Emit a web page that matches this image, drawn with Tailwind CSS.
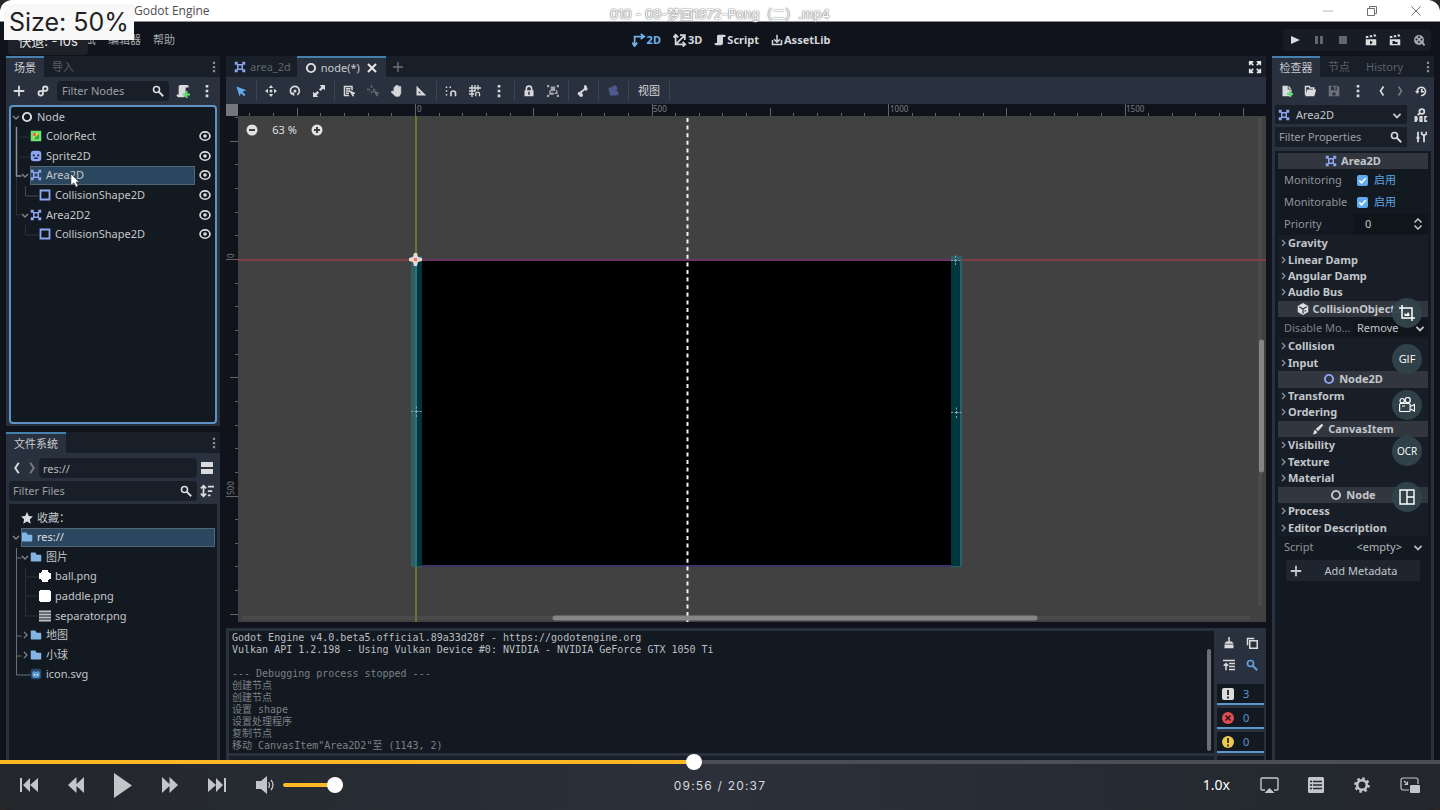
<!DOCTYPE html>
<html lang="zh-CN">
<head>
<meta charset="utf-8">
<title>Godot Engine</title>
<script src="https://cdn.jsdelivr.net/npm/@tailwindcss/browser@4"></script>
</head>
<body class="h-screen overflow-hidden bg-[#2a2726] font-['Noto_Sans','Noto_Sans_CJK_SC',sans-serif] text-[11px] leading-4 text-[#c3c6ca]">
<svg class="hidden" aria-hidden="true">
  <symbol id="area" viewBox="0 0 16 16"><g fill="none" stroke="#8da5f3" stroke-width="2"><path d="M5 5h6v6H5zM2 5V2h3M11 2h3v3M14 11v3h-3M5 14H2v-3M2 2l3 3M14 2l-3 3M14 14l-3-3M2 14l3-3"/></g></symbol>
  <symbol id="ring" viewBox="0 0 16 16"><circle cx="8" cy="8" r="5.5" fill="none" stroke="currentColor" stroke-width="2.6"/></symbol>
  <symbol id="eye" viewBox="0 0 16 16"><ellipse cx="8" cy="8" rx="6.6" ry="5.6" fill="none" stroke="currentColor" stroke-width="2.2"/><circle cx="8" cy="8" r="2.4" fill="currentColor"/></symbol>
  <symbol id="rect" viewBox="0 0 16 16"><path d="M2 2h12v12H2z" fill="none" stroke="#8da5f3" stroke-width="2.4"/></symbol>
  <symbol id="down" viewBox="0 0 10 10"><path d="M2 4l3 3 3-3" fill="none" stroke="currentColor" stroke-width="1.5"/></symbol>
  <symbol id="right" viewBox="0 0 10 10"><path d="M4 2l3 3-3 3" fill="none" stroke="currentColor" stroke-width="1.3"/></symbol>
  <symbol id="folder" viewBox="0 0 16 16"><path d="M1 3a1 1 0 0 1 1-1h5l2 3h5a1 1 0 0 1 1 1v7a1 1 0 0 1-1 1H2a1 1 0 0 1-1-1z" fill="#82b5e3"/></symbol>
  <symbol id="search" viewBox="0 0 16 16"><circle cx="6" cy="6" r="4" fill="none" stroke="currentColor" stroke-width="2.2"/><path d="M9 9l6 6" stroke="currentColor" stroke-width="2.4"/></symbol>
  <symbol id="dots" viewBox="0 0 16 16"><path d="M6.5 1h3v3h-3zM6.5 6.5h3v3h-3zM6.5 12h3v3h-3z" fill="currentColor"/></symbol>
  <symbol id="plus" viewBox="0 0 16 16"><path d="M8 1v14M1 8h14" stroke="currentColor" stroke-width="2.4"/></symbol>
  <symbol id="script" viewBox="0 0 16 16"><path d="M6 1h8a2 2 0 0 1 1 3h-3v8a3 3 0 0 1-3 3H3a2 2 0 0 1-2-3h3V3a2 2 0 0 1 2-2z" fill="currentColor"/></symbol>
  <symbol id="prev" viewBox="0 0 10 16"><path d="M7 2L3 8l4 6" fill="none" stroke="currentColor" stroke-width="2.2"/></symbol>
  <symbol id="next" viewBox="0 0 10 16"><path d="M3 2l4 6-4 6" fill="none" stroke="currentColor" stroke-width="2.2"/></symbol>
  <symbol id="clap" viewBox="0 0 16 16"><path d="M1 7h14v8H1zM1 3l3-.6 1 2.6-4 .8zM6 2l3-.6 1 2.6-3 .6zM11 1l3-.6 1 2.6-3 .6z" fill="currentColor"/></symbol>
</svg>

<div class="relative flex h-full flex-col overflow-hidden rounded-xl bg-[#10131b]">

  <header class="relative flex h-[22px] shrink-0 items-center border-b border-[#8b8d90] bg-white">
    <span class="pl-[134px] font-['Open_Sans',sans-serif] text-[12px] text-[#4c4c4c]">Godot Engine</span>
    <h1 class="absolute inset-x-0 top-[5px] text-center font-['Inter','Noto_Sans_CJK_SC',sans-serif] text-[13px] font-normal leading-[18px] text-white [text-shadow:0_0_1px_#777,0_0_1px_#888,0_0_2px_#999]">010 - 09-梦回1972-Pong（二）.mp4</h1>
    <div class="ml-auto flex items-center gap-8 pr-[18px] text-[#6f6f6f]">
      <button aria-label="Minimize"><svg class="size-3" viewBox="0 0 12 12"><path d="M1 6h10" stroke="#b5b5b5"/></svg></button>
      <button aria-label="Restore"><svg class="size-3" viewBox="0 0 12 12" fill="none" stroke="currentColor"><path d="M1.500 3.500h7v7h-7zM3.500 3V1.500h7v7H9"/></svg></button>
      <button aria-label="Close"><svg class="size-3" viewBox="0 0 12 12" stroke="currentColor"><path d="M1.500 1.500l9 9M10.500 1.500l-9 9"/></svg></button>
    </div>
  </header>

  <nav class="grid h-[34px] shrink-0 grid-cols-[1fr_auto_1fr] items-center pl-[22px] pt-px text-[#d3d5d8]">
    <div class="flex gap-3 pl-[52px] text-[#a5a8ad]">
      <button>调试</button><button>编辑器</button><button>帮助</button>
    </div>
    <div class="flex items-center gap-3 font-bold">
      <button class="flex items-center gap-px text-[#6eb2ee]"><svg class="size-3.5" viewBox="0 0 16 16" fill="none" stroke="currentColor" stroke-width="2"><path d="M3 14V4h10M10 1l4 3-4 3M0 11l3 4 3-4"/></svg>2D</button>
      <button class="flex items-center gap-px"><svg class="size-3.5" viewBox="0 0 16 16" fill="none" stroke="currentColor" stroke-width="2"><path d="M3 2v11h11M3 13l10-10M8 2.500h5.500V8M.5 5L3 2l3 3M11 10l3 3-3 2.500"/></svg>3D</button>
      <button class="flex items-center gap-px"><svg class="size-3"><use href="#script"/></svg>Script</button>
      <button class="flex items-center gap-px"><svg class="size-3" viewBox="0 0 16 16" fill="none" stroke="currentColor" stroke-width="2"><path d="M8 1v9M4 7l4 4 4-4M2 8v6h12V8"/></svg>AssetLib</button>
    </div>
    <div class="mr-[9px] flex h-[22px] items-center justify-self-end rounded-sm bg-[#171c26] text-[#dcdddf] *:flex *:w-6 *:justify-center">
      <button aria-label="Play"><svg class="size-3" viewBox="0 0 12 12"><path d="M2 2l9 4-9 4z" fill="currentColor"/></svg></button>
      <button aria-label="Pause" class="text-[#62666d]"><svg class="size-3" viewBox="0 0 12 12"><path d="M2 2h3v8H2zM7 2h3v8H7z" fill="currentColor"/></svg></button>
      <button aria-label="Stop" class="mr-1 text-[#62666d]"><svg class="size-3" viewBox="0 0 12 12"><path d="M2 2h8v8H2z" fill="currentColor"/></svg></button>
      <button aria-label="Play scene"><svg class="size-3" viewBox="0 0 12 12"><use href="#clap"/><path d="M5 6.500l3 2-3 2z" fill="#171c26"/></svg></button>
      <button aria-label="Play custom scene"><svg class="size-3" viewBox="0 0 12 12"><use href="#clap"/><path d="M3.500 7h2l1 1h2v2h-5z" fill="#171c26"/></svg></button>
      <button aria-label="Movie maker" class="text-[#a5a7ab]"><svg class="size-3" viewBox="0 0 12 12"><circle cx="6" cy="6" r="5" fill="currentColor"/><path d="M9 8l2.500 3.500" stroke="currentColor" stroke-width="2"/><g fill="#171c26"><circle cx="6" cy="3" r="1"/><circle cx="3.500" cy="5.500" r="1"/><circle cx="8.500" cy="5.500" r="1"/><circle cx="6" cy="8" r="1"/></g></svg></button>
    </div>
  </nav>

  <main class="flex min-h-0 flex-1 gap-1.5 overflow-hidden px-1.5">

    <!-- Left docks -->
    <aside class="flex w-[214px] shrink-0 flex-col gap-1.5">
      <section class="flex h-[370px] shrink-0 flex-col bg-[#2a313e] px-[3px] pb-0.5">
        <div class="-mx-[3px] flex h-[21px] shrink-0 items-stretch bg-[#191f28]">
          <button class="border-t-2 border-[#477fad] bg-[#2a313e] px-2 text-[#c9ccd0]">场景</button>
          <button class="px-2 text-[#5a6069]">导入</button>
          <button aria-label="Dock menu" class="ml-auto text-[#888c92]"><svg class="size-3"><use href="#dots"/></svg></button>
        </div>
        <div class="flex h-7 shrink-0 items-center text-[#dadbdd]">
          <button aria-label="Add node" class="flex w-6 shrink-0 justify-center pr-1"><svg class="size-3"><use href="#plus"/></svg></button>
          <button aria-label="Instance scene" class="flex w-6 shrink-0 justify-center pr-1"><svg class="size-3" viewBox="0 0 16 16" fill="none" stroke="currentColor" stroke-width="2.400"><circle cx="11" cy="5" r="3"/><circle cx="5" cy="11" r="3"/><path d="M7 9l2-2"/></svg></button>
          <label class="flex h-5 flex-1 items-center rounded-sm bg-[#191f28] px-[5px]"><input aria-label="Filter Nodes" placeholder="Filter Nodes" class="w-0 flex-1 bg-transparent outline-none placeholder:text-[#9b9fa5]"><svg class="size-3 shrink-0"><use href="#search"/></svg></label>
          <button aria-label="Attach script" class="flex w-7 shrink-0 justify-center"><svg class="size-3.5" viewBox="0 0 16 16"><path d="M5 1h8a2 2 0 0 1 1 3h-3v8a3 3 0 0 1-3 3H3a2 2 0 0 1-2-3h2V3a2 2 0 0 1 2-2z" fill="currentColor"/><path d="M12 8v8M8 12h8" stroke="#5fdb6b" stroke-width="2.400"/></svg></button>
          <button aria-label="More" class="flex w-5 shrink-0 justify-center"><svg class="size-3.5"><use href="#dots"/></svg></button>
        </div>
        <div class="relative min-h-0 flex-1 rounded-sm border-2 border-[#5f93c5] bg-[#131920]">
          <svg class="absolute left-0 top-0 h-[140px] w-[30px]" fill="none"><path d="M5.500 20v49h5" stroke="#8b9096" stroke-width="1.500"/><path d="M5.500 70v38h5M9 30h9M9 50h9M14.500 118v10h15" stroke="#2b323b"/><path d="M14.500 79v10h13" stroke="#454c54"/></svg>
          <ul class="relative grid h-[137px] auto-rows-fr" id="scene-tree">
            <li class="flex items-center"><svg class="size-2.5 text-[#7d8289]"><use href="#down"/></svg><span class="flex flex-1 items-center gap-1"><svg class="size-3 text-[#dcdddf]"><use href="#ring"/></svg>Node</span></li>
            <li class="flex items-center pl-[19px]"><span class="flex flex-1 items-center gap-1"><svg class="size-3" viewBox="0 0 16 16"><path d="M1 1h14v14H1z" fill="#6fe36f"/><path d="M4 4h4v4H4z" fill="#ef6a4a"/><path d="M8 4h4v8H4V8l4 3z" fill="#e4d53c"/><path d="M12 5v7H5z" fill="#3f9f46"/></svg>ColorRect</span><button aria-label="Toggle visibility" class="mx-1 text-[#dcdddf]"><svg class="block size-3"><use href="#eye"/></svg></button></li>
            <li class="flex items-center pl-[19px]"><span class="flex flex-1 items-center gap-1"><svg class="size-3" viewBox="0 0 16 16"><rect x="1" y="1" width="14" height="14" rx="4" fill="#8da5f3"/><g fill="#1c2440"><circle cx="5" cy="7" r="1.500"/><circle cx="11" cy="7" r="1.500"/><path d="M5 10h6l-1 2H6z"/></g></svg>Sprite2D</span><button aria-label="Toggle visibility" class="mx-1 text-[#dcdddf]"><svg class="block size-3"><use href="#eye"/></svg></button></li>
            <li class="flex items-center pl-[9px]"><svg class="size-2.5 text-[#7d8289]"><use href="#down"/></svg><span class="flex h-full flex-1 items-center gap-1 bg-[#2b465f] outline -outline-offset-1 outline-[#536676]"><svg class="size-3"><use href="#area"/></svg>Area2D</span><button aria-label="Toggle visibility" class="mx-1 text-[#dcdddf]"><svg class="block size-3"><use href="#eye"/></svg></button></li>
            <li class="flex items-center pl-7"><span class="flex flex-1 items-center gap-1"><svg class="size-3"><use href="#rect"/></svg>CollisionShape2D</span><button aria-label="Toggle visibility" class="mx-1 text-[#dcdddf]"><svg class="block size-3"><use href="#eye"/></svg></button></li>
            <li class="flex items-center pl-[9px]"><svg class="size-2.5 text-[#7d8289]"><use href="#down"/></svg><span class="flex flex-1 items-center gap-1"><svg class="size-3"><use href="#area"/></svg>Area2D2</span><button aria-label="Toggle visibility" class="mx-1 text-[#dcdddf]"><svg class="block size-3"><use href="#eye"/></svg></button></li>
            <li class="flex items-center pl-7"><span class="flex flex-1 items-center gap-1"><svg class="size-3"><use href="#rect"/></svg>CollisionShape2D</span><button aria-label="Toggle visibility" class="mx-1 text-[#dcdddf]"><svg class="block size-3"><use href="#eye"/></svg></button></li>
          </ul>
          <svg class="absolute left-[59px] top-[66px] h-4 w-2.5" viewBox="0 0 10 16"><path d="M1 1v11l3-2 2 4 2-1-2-4h3z" fill="#fff" stroke="#333" stroke-width=".5"/></svg>
        </div>
      </section>

      <section class="flex min-h-0 flex-1 flex-col bg-[#2a313e] px-[3px]">
        <div class="-mx-[3px] flex h-[21px] shrink-0 items-stretch bg-[#191f28]">
          <button class="border-t-2 border-[#477fad] bg-[#2a313e] px-2 text-[#c9ccd0]">文件系统</button>
          <button aria-label="Dock menu" class="ml-auto text-[#888c92]"><svg class="size-3"><use href="#dots"/></svg></button>
        </div>
        <div class="mt-[5px] flex h-5 shrink-0 items-center text-[#dadbdd]">
          <button aria-label="Back" class="flex w-[15px] justify-center"><svg class="h-3.5 w-2.5"><use href="#prev"/></svg></button>
          <button aria-label="Forward" class="flex w-[15px] justify-center text-[#777c84]"><svg class="h-3.5 w-2.5"><use href="#next"/></svg></button>
          <input aria-label="Path" value="res://" class="h-5 w-0 flex-1 rounded-sm bg-[#191f28] pl-1 text-[#b5b8bd] outline-none">
          <button aria-label="Split view" class="flex w-5 justify-center"><svg class="size-3.5" viewBox="0 0 14 14" fill="currentColor"><path d="M1 1h12v5H1zM1 8h12v5H1z"/></svg></button>
        </div>
        <div class="my-[3px] flex h-5 shrink-0 items-center text-[#dadbdd]">
          <label class="flex h-5 flex-1 items-center rounded-sm bg-[#191f28] pl-1 pr-[5px]"><input aria-label="Filter Files" placeholder="Filter Files" class="w-0 flex-1 bg-transparent outline-none placeholder:text-[#9b9fa5]"><svg class="size-3 shrink-0"><use href="#search"/></svg></label>
          <button aria-label="Sort" class="flex w-5 justify-center"><svg class="size-3.5" viewBox="0 0 16 16" fill="none" stroke="currentColor" stroke-width="2"><path d="M4 3v10M1 5l3-3 3 3M1 11l3 3 3-3M9 3h7M9 8h5M9 13h3"/></svg></button>
        </div>
        <div class="relative min-h-0 flex-1 bg-[#131920] px-0.5 pt-1">
          <svg class="absolute left-0.5 top-0.5 h-[180px] w-[30px]" fill="none"><path d="M5.500 42v127h14M5.500 52h5M5.500 130h5M5.500 150h5" stroke="#6a7077"/><path d="M14.500 62v48h14M14.500 71h14M14.500 90h14" stroke="#2b323b"/></svg>
          <ul class="relative grid h-[176px] auto-rows-fr">
            <li class="flex items-center gap-1 pl-2.5"><svg class="size-3" viewBox="0 0 16 16"><path d="M8 0l2.400 5.400 5.600.6-4.200 3.800L13 15.500 8 12.500l-5 3 1.200-5.700L0 6l5.600-.6z" fill="#dcdddf"/></svg>收藏：</li>
            <li class="flex items-center"><svg class="size-2.5 text-[#7d8289]"><use href="#down"/></svg><span class="flex h-full flex-1 items-center gap-1 bg-[#2b465f] text-[#dcdddf] outline -outline-offset-1 outline-[#536676]"><svg class="size-3"><use href="#folder"/></svg>res://</span></li>
            <li class="flex items-center pl-[9px]"><svg class="size-2.5 text-[#7d8289]"><use href="#down"/></svg><span class="flex items-center gap-1"><svg class="size-3"><use href="#folder"/></svg>图片</span></li>
            <li class="flex items-center gap-1 pl-7"><svg class="size-3" viewBox="0 0 12 12"><path d="M3 0h6v2h1v1h2v6h-2v1H9v2H3v-2H2V9H0V3h2V2h1z" fill="#fff"/></svg>ball.png</li>
            <li class="flex items-center gap-1 pl-7"><svg class="size-3" viewBox="0 0 12 12"><path d="M1 0h10v1h1v10h-1v1H1v-1H0V1h1z" fill="#fff"/></svg>paddle.png</li>
            <li class="flex items-center gap-1 pl-7"><svg class="size-3" viewBox="0 0 12 12"><path d="M0 1.500h12M0 4.500h12M0 7.500h12M0 10.500h12" stroke="#bfc1c4" stroke-width="2"/></svg>separator.png</li>
            <li class="flex items-center pl-[9px]"><svg class="size-2.5 text-[#7d8289]"><use href="#right"/></svg><span class="flex items-center gap-1"><svg class="size-3"><use href="#folder"/></svg>地图</span></li>
            <li class="flex items-center pl-[9px]"><svg class="size-2.5 text-[#7d8289]"><use href="#right"/></svg><span class="flex items-center gap-1"><svg class="size-3"><use href="#folder"/></svg>小球</span></li>
            <li class="flex items-center gap-1 pl-[19px]"><svg class="size-3" viewBox="0 0 16 16"><rect x="1" y="1" width="14" height="14" rx="3" fill="#284a6c"/><path d="M3 6l2-2 2 1h2l2-1 2 2v5l-2 2H5l-2-2z" fill="#5e9bd2"/><circle cx="6" cy="9" r="1" fill="#fff"/><circle cx="10" cy="9" r="1" fill="#fff"/></svg>icon.svg</li>
          </ul>
        </div>
      </section>
    </aside>

    <!-- Viewport and output -->
    <div class="flex min-w-0 flex-1 flex-col">
      <div class="flex h-[21px] shrink-0 items-stretch bg-[#191f28]">
        <button class="flex items-center gap-1 pl-2 pr-1.5 text-[#5f656e]"><svg class="size-3"><use href="#area"/></svg>area_2d</button>
        <div class="flex items-center border-t-2 border-[#477fad] bg-[#2a313e] px-2 text-[#c9ccd0]"><button class="flex items-center gap-1"><svg class="size-3 text-[#dcdddf]"><use href="#ring"/></svg>node(*)</button><button aria-label="Close tab" class="ml-1.5 text-[#e6e7e8]"><svg class="block size-3" viewBox="0 0 12 12"><path d="M2 2l8 8M10 2l-8 8" stroke="currentColor" stroke-width="2"/></svg></button></div>
        <button aria-label="New tab" class="ml-1.5 text-[#6c727a]"><svg class="size-3" viewBox="0 0 12 12"><path d="M6 1v10M1 6h10" stroke="currentColor" stroke-width="1.400"/></svg></button>
        <button aria-label="Distraction free mode" class="ml-auto mr-1 text-[#e6e7e8]"><svg class="size-3.5" viewBox="0 0 16 16" fill="none" stroke="currentColor" stroke-width="2"><path d="M2 6V2h4M2 2l4 4M10 2h4v4M14 2l-4 4M2 10v4h4M2 14l4-4M14 10v4h-4M14 14l-4-4"/></svg></button>
      </div>
      <div class="flex h-[27px] shrink-0 items-center bg-[#2a313e] pl-[3px] text-[#d6d8da] *:[button]:flex *:[button]:w-6 *:[button]:justify-center">
        <button aria-label="Select"><svg class="size-3" viewBox="0 0 16 16"><path d="M2 2l13 5-5 2 4 4-2 2-4-4-2 4z" fill="#62aaf0"/></svg></button>
        <i class="ml-[3px] mr-0.5 h-5 w-px bg-[#3b4453]"></i>
        <button aria-label="Move"><svg class="size-3" viewBox="0 0 16 16" fill="currentColor"><circle cx="8" cy="8" r="2"/><path d="M8 0l3 4H5zM8 16l3-4H5zM0 8l4-3v6zM16 8l-4-3v6z"/></svg></button>
        <button aria-label="Rotate"><svg class="size-3" viewBox="0 0 16 16"><path d="M4 12.500A6 6 0 1 1 11 13" fill="none" stroke="currentColor" stroke-width="2.200"/><circle cx="8" cy="8" r="2" fill="currentColor"/><path d="M1 10h6v5z" fill="currentColor"/></svg></button>
        <button aria-label="Scale"><svg class="size-3" viewBox="0 0 16 16" fill="currentColor"><path d="M9 0h7v7l-2.500-2L10 8 8 6l3-3.500zM7 16H0V9l2.500 2L6 8l2 2-3 3.500z"/></svg></button>
        <i class="ml-[3px] mr-0.5 h-5 w-px bg-[#3b4453]"></i>
        <button aria-label="List select"><svg class="size-3" viewBox="0 0 16 16" fill="none" stroke="currentColor" stroke-width="2"><path d="M12 7V2H2v12h6M4 5h6M4 8h5M4 11h4"/><path d="M8 8l7 3-3 1 2 3" fill="currentColor"/></svg></button>
        <button aria-label="Pivot" class="text-[#626974]"><svg class="size-3" viewBox="0 0 16 16" fill="none" stroke="currentColor" stroke-width="2"><path d="M6 0v4M6 8v3M0 6h4M8 6h3"/><path d="M8 8l7 3-3 1 2 3" fill="currentColor"/></svg></button>
        <button aria-label="Pan"><svg class="size-3" viewBox="0 0 16 16"><path d="M4 9V3h2v4V1h2v6V1h2v6l1-5h2v9l-2 4H6L0 9l2-1z" fill="currentColor" stroke="currentColor"/></svg></button>
        <button aria-label="Ruler"><svg class="size-3" viewBox="0 0 16 16"><path d="M2 1l13 13H2zM5 8v3h3z" fill="currentColor" fill-rule="evenodd"/></svg></button>
        <i class="ml-[3px] mr-0.5 h-5 w-px bg-[#3b4453]"></i>
        <button aria-label="Smart snap"><svg class="size-3" viewBox="0 0 16 16"><path d="M1 2h2v2H1zM6 2h2v2H6zM1 7h2v2H1zM1 12h2v2H1z" fill="currentColor"/><path d="M8 15v-4a3 3 0 0 1 6 0v4" fill="none" stroke="currentColor" stroke-width="2.200"/></svg></button>
        <button aria-label="Grid snap"><svg class="size-3" viewBox="0 0 16 16" fill="none" stroke="currentColor" stroke-width="1.800"><path d="M4 0v16M8 0v7M12 0v7M0 4h16M0 8h9M0 12h7M9 15v-3a2.500 2.500 0 0 1 5 0v3"/></svg></button>
        <button aria-label="Snap options"><svg class="size-3.5"><use href="#dots"/></svg></button>
        <i class="ml-[3px] mr-0.5 h-5 w-px bg-[#3b4453]"></i>
        <button aria-label="Lock"><svg class="size-3" viewBox="0 0 16 16"><path d="M4.500 8V5a3.500 3.500 0 0 1 7 0v3" fill="none" stroke="currentColor" stroke-width="2.200"/><path d="M2 7h12v8H2zM7 9v4h2V9z" fill="currentColor" fill-rule="evenodd"/></svg></button>
        <button aria-label="Group" class="text-[#a3a7ad]"><svg class="size-3" viewBox="0 0 16 16" fill="currentColor"><path d="M0 0h3v3H0zM13 0h3v3h-3zM0 13h3v3H0zM13 13h3v3h-3zM5 2h6v6H5zM3 7h2v3h4v3H3zM12 7h2v5h-4v-2h2z"/></svg></button>
        <i class="ml-[3px] mr-0.5 h-5 w-px bg-[#3b4453]"></i>
        <button aria-label="Skeleton"><svg class="size-3" viewBox="0 0 16 16" fill="currentColor"><path d="M10 0a2.500 2.500 0 0 1 3 3 2.500 2.500 0 1 1-3 4l-4 4a2.500 2.500 0 1 1-3 3 2.500 2.500 0 1 1 1-5l5-4z"/></svg></button>
        <i class="ml-[3px] mr-0.5 h-5 w-px bg-[#3b4453]"></i>
        <button aria-label="Camera override" class="text-[#4d5b8c]"><svg class="size-3" viewBox="0 0 16 16" fill="currentColor"><circle cx="10" cy="4" r="3.500"/><circle cx="5" cy="6" r="3"/><path d="M3 7h10v2l2-1v6l-2-1v1H4z"/></svg></button>
        <i class="ml-[3px] mr-0.5 h-5 w-px bg-[#3b4453]"></i>
        <span class="px-[7px]"><a href="#view">视图</a></span>
        <i class="ml-0.5 h-5 w-px bg-[#3b4453]"></i>
      </div>

      <div class="relative min-h-0 flex-1 overflow-hidden">
        <svg class="absolute inset-0 h-full w-full" id="canvas" aria-label="2D viewport">
          <rect x="12" y="12" width="100%" height="100%" fill="#414141"/>
          <rect width="12" height="12" fill="#73767a"/>
          <path id="ticks" stroke="#62666c" fill="none"/>
          <g fill="#7d8187" font-size="8" font-family="Noto Sans, sans-serif"><text x="191" y="8">0</text><text x="427" y="8">500</text><text x="664" y="8">1000</text><text x="900" y="8">1500</text><text transform="translate(8 154) rotate(-90)">0</text><text transform="translate(8 391) rotate(-90)">500</text></g>
          <path d="M1034 14v488M16 514h1008" stroke="#4a4a4a" stroke-width="4"/>
          <rect x="12" y="155" width="1028" height="2" fill="#804042"/>
          <rect x="190" y="156" width="545" height="306" fill="#000"/>
          <rect x="190" y="155" width="545" height="2" fill="#6b3268"/>
          <rect x="190" y="461" width="545" height="2" fill="#3a3564"/>
          <path d="M185 152h5v311h-5zM734 152h2v311h-2z" fill="#2b6069"/>
          <path d="M190 156h6v306h-6zM725 156h9v306h-9z" fill="#003640"/>
          <path d="M190 152h6v4h-6zM190 462h6v1h-6zM725 152h9v4h-9zM725 462h9v1h-9z" fill="#2b6069"/>
          <rect x="189" y="12" width="2" height="506" fill="#63792f"/>
          <rect x="189" y="156" width="2" height="307" fill="#347269"/>
          <path d="M461.500 14v504" stroke="#f2f2f2" stroke-width="2" stroke-dasharray="4 3.600"/>
          <g id="pivots" stroke="#8fa3a6" stroke-width="1" fill="none"><path d="M185 307.500h2M188.500 307.500h4M193.500 307.500h2M190.500 302.500v2M190.500 306v3M190.500 311v2M725 308.500h2M728.500 308.500h4M733.500 308.500h2M730.500 303.500v2M730.500 307v3M730.500 312v2M725 156.500h2M727.500 156.500h4M732.500 156.500h2M729.500 151.500v2M729.500 155v3M729.500 159v2"/></g>
          <path d="M188 149h3l1 4 4 1v3l-4 1-1 4h-3l-1-4-4-1v-3l4-1z" fill="#e8d8d4"/><rect x="188" y="154" width="3" height="3" fill="#ef6d5c"/>
          <path d="M1035.500 238v128M329 514h480" stroke="#858585" stroke-width="5" stroke-linecap="round"/>
        </svg>
        <div class="absolute left-5 top-[18px] flex items-center text-[#dfe0e1]">
          <button aria-label="Zoom out"><svg class="block size-3" viewBox="0 0 12 12"><circle cx="6" cy="6" r="5.500" fill="#e2e2e2"/><path d="M3 6h6" stroke="#414141" stroke-width="2"/></svg></button>
          <button class="w-[53px] text-center">63 %</button>
          <button aria-label="Zoom in"><svg class="block size-3" viewBox="0 0 12 12"><circle cx="6" cy="6" r="5.500" fill="#e2e2e2"/><path d="M3 6h6M6 3v6" stroke="#414141" stroke-width="2"/></svg></button>
        </div>
      </div>

      <section class="mt-1.5 flex h-[132px] shrink-0 flex-col bg-[#2a313e] pl-[3px]">
        <div class="mt-[3px] flex h-[122px] shrink-0">
          <div class="relative min-w-0 flex-1 overflow-hidden bg-[#131920] pl-[3px] pr-3 pt-px">
            <pre class="font-['DejaVu_Sans_Mono','Noto_Sans_CJK_SC',monospace] text-[10px] leading-3 text-[#7b8086]"><span class="text-[#bcbfc2]">Godot Engine v4.0.beta5.official.89a33d28f - https://godotengine.org
Vulkan API 1.2.198 - Using Vulkan Device #0: NVIDIA - NVIDIA GeForce GTX 1050 Ti</span>

--- Debugging process stopped ---
创建节点
创建节点
设置 shape
设置处理程序
复制节点
移动 CanvasItem"Area2D2"至 (1143, 2)</pre>
            <i class="absolute bottom-0.5 right-[3px] top-[18px] w-1 rounded bg-[#6c7075]"></i>
          </div>
          <div class="flex w-[52px] shrink-0 flex-col items-stretch pl-[3px] pr-0.5 pt-px text-[#dadbdd]">
            <div class="grid h-[44px] grid-cols-2 place-items-center">
              <button aria-label="Clear"><svg class="block size-3" viewBox="0 0 16 16"><path d="M7 0h2v6h3l2 3H2l2-3h3zM2 10h12v5H2z" fill="currentColor"/></svg></button>
              <button aria-label="Copy"><svg class="block size-3" viewBox="0 0 16 16" fill="none" stroke="currentColor" stroke-width="2"><path d="M5 5h10v10H5zM2 11V2h9"/></svg></button>
              <button aria-label="Collapse"><svg class="block size-3" viewBox="0 0 16 16" fill="none" stroke="currentColor" stroke-width="2"><path d="M0 2h16M8 6h8M8 10h8M8 14h8M4 15V6M1 9l3-3 3 3"/></svg></button>
              <button aria-label="Search" class="text-[#5fa3e0]"><svg class="block size-3"><use href="#search"/></svg></button>
            </div>
            <div class="mt-2 flex flex-col gap-[3px] text-[#5c98cf]">
              <button class="flex h-[21px] items-center gap-[9px] border-b-2 border-[#5f97cc] bg-[#131920] pl-[5px]"><svg class="size-3" viewBox="0 0 12 12"><rect x="0" y="0" width="12" height="12" rx="2" fill="#dcdcdc"/><path d="M6 2v5M6 8.500v2" stroke="#333" stroke-width="2"/></svg>3</button>
              <button class="flex h-[21px] items-center gap-[9px] border-b-2 border-[#5f97cc] bg-[#131920] pl-[5px]"><svg class="size-3" viewBox="0 0 12 12"><circle cx="6" cy="6" r="6" fill="#e04e50"/><path d="M3.500 3.500l5 5M8.500 3.500l-5 5" stroke="#30151b" stroke-width="1.600"/></svg>0</button>
              <button class="flex h-[21px] items-center gap-[9px] border-b-2 border-[#5f97cc] bg-[#131920] pl-[5px]"><svg class="size-3" viewBox="0 0 12 12"><circle cx="6" cy="6" r="6" fill="#ecca52"/><path d="M6 2v5M6 8.500v2" stroke="#332b15" stroke-width="1.800"/></svg>0</button>
            </div>
          </div>
        </div>
        <div class="mt-[3px] flex flex-1 gap-[3px]"><i class="flex-1 bg-[#191f28]"></i><i class="mr-0.5 w-[47px] bg-[#131920]"></i></div>
      </section>
    </div>

    <!-- Inspector -->
    <aside class="flex w-[162px] shrink-0 flex-col bg-[#2a313e] px-[3px]">
      <div class="-mx-[3px] flex h-[21px] shrink-0 items-stretch bg-[#191f28]">
        <button class="w-12 border-t-2 border-[#477fad] bg-[#2a313e] text-[#c9ccd0]">检查器</button>
        <button class="px-2 text-[#5a6069]">节点</button>
        <button class="px-2 text-[#5a6069]">History</button>
        <button aria-label="Dock menu" class="ml-auto text-[#888c92]"><svg class="size-3"><use href="#dots"/></svg></button>
      </div>
      <div class="flex h-7 shrink-0 items-center text-[#dadbdd] *:flex *:justify-center">
        <button aria-label="New resource" class="w-[23px]"><svg class="size-3" viewBox="0 0 16 16"><path d="M2 1h7v5h5v9H2zM10 1l4 4h-4z" fill="currentColor"/><path d="M12 8v8M8 12h8" stroke="#5fdb6b" stroke-width="2.400"/></svg></button>
        <button aria-label="Open resource" class="w-6"><svg class="size-3" viewBox="0 0 16 16" fill="none" stroke="currentColor" stroke-width="2"><path d="M2 13V2h5l1 2h5v3"/><path d="M5 7h10l-2 7H3z" fill="currentColor"/></svg></button>
        <button aria-label="Save resource" class="w-6 text-[#6d727a]"><svg class="size-3" viewBox="0 0 16 16"><path d="M1 1h12l2 2v12H1zM4 2v5h8V2h-2v4H8V2zM6 10v4h4v-4z" fill="currentColor" fill-rule="evenodd"/></svg></button>
        <button aria-label="More" class="w-6"><svg class="size-3.5"><use href="#dots"/></svg></button>
        <button aria-label="Previous" class="w-6"><svg class="h-3 w-2.5"><use href="#prev"/></svg></button>
        <button aria-label="Next" class="w-3 text-[#777c84]"><svg class="h-3 w-2.5"><use href="#next"/></svg></button>
        <button aria-label="History" class="ml-auto w-5"><svg class="size-3" viewBox="0 0 16 16" fill="none" stroke="currentColor" stroke-width="2.200"><path d="M3 9a5.500 5.500 0 1 1 5 5M9 5v4h3"/><path d="M0 8h6l-3 4z" fill="currentColor" stroke="none"/></svg></button>
      </div>
      <div class="flex h-[19px] shrink-0 items-center">
        <button class="flex h-full flex-1 items-center bg-[#191f28] pl-[3px] pr-1 text-[#c3c6ca]"><svg class="mr-1.5 size-3"><use href="#area"/></svg>Area2D<svg class="ml-auto size-3"><use href="#down"/></svg></button>
        <button aria-label="Documentation" class="ml-1 flex w-5 justify-center text-[#dadbdd]"><svg class="size-3.5" viewBox="0 0 16 16" fill="none" stroke="currentColor" stroke-width="2"><circle cx="9" cy="4" r="2.800"/><path d="M7 6L4 8"/><path d="M1.500 10v5h1q2-2.500 0-5zM7 10h2v5H7zM15 10h-2.500v5H15" stroke-width="1.800"/></svg></button>
      </div>
      <div class="mb-1 mt-[3px] flex h-5 shrink-0 items-center text-[#dadbdd]">
        <label class="flex h-full flex-1 items-center bg-[#191f28] pl-1 pr-[5px]"><input aria-label="Filter Properties" placeholder="Filter Properties" class="w-0 flex-1 bg-transparent outline-none placeholder:text-[#9b9fa5]"><svg class="size-3 shrink-0"><use href="#search"/></svg></label>
        <button aria-label="Tools" class="ml-1 flex w-5 justify-center"><svg class="size-3" viewBox="0 0 16 16" fill="none" stroke="currentColor" stroke-width="2.400"><path d="M4 1v7M4 10v5M2 9h4M12 15V6M9 1v3l3 2 3-2V1"/></svg></button>
      </div>
      <div class="min-h-0 flex-1 bg-[#131920] px-[3px] pt-0.5">
        <h2 class="flex h-4 items-center justify-center gap-1 bg-[#31363f] font-bold"><svg class="size-3"><use href="#area"/></svg>Area2D</h2>
        <div class="grid h-[66px] auto-rows-fr grid-cols-[75px_1fr] items-center text-[#8f949a]">
          <label for="monitoring" class="pl-1.5">Monitoring</label>
          <span class="flex items-center gap-1.5 pl-1 text-[#5fa3e0]"><input id="monitoring" type="checkbox" checked class="size-[11px] appearance-none rounded-xs bg-[#62aaf0]"><svg class="pointer-events-none absolute size-[11px]" viewBox="0 0 12 12"><path d="M2.500 6l2.500 2.500 4.500-5" fill="none" stroke="#fff" stroke-width="1.800"/></svg>启用</span>
          <label for="monitorable" class="pl-1.5">Monitorable</label>
          <span class="flex items-center gap-1.5 pl-1 text-[#5fa3e0]"><input id="monitorable" type="checkbox" checked class="size-[11px] appearance-none rounded-xs bg-[#62aaf0]"><svg class="pointer-events-none absolute size-[11px]" viewBox="0 0 12 12"><path d="M2.500 6l2.500 2.500 4.500-5" fill="none" stroke="#fff" stroke-width="1.800"/></svg>启用</span>
          <label for="priority" class="pl-1.5">Priority</label>
          <span class="flex h-5 items-center bg-[#10151c] pl-3 pr-1 text-[#c3c6ca]"><input id="priority" value="0" class="w-0 flex-1 bg-transparent outline-none"><svg class="size-3" viewBox="0 0 12 12" fill="none" stroke="currentColor" stroke-width="1.500"><path d="M2.500 4.500L6 1l3.500 3.500M2.500 7.500L6 11l3.500-3.500"/></svg></span>
        </div>
        <div class="grid h-[82px] auto-rows-fr bg-[#181e27] font-bold *:flex *:items-center">
          <button><svg class="size-2.5 text-[#8f949a]"><use href="#right"/></svg>Gravity</button>
          <button><svg class="size-2.5 text-[#8f949a]"><use href="#right"/></svg>Linear Damp</button>
          <button><svg class="size-2.5 text-[#8f949a]"><use href="#right"/></svg>Angular Damp</button>
          <button><svg class="size-2.5 text-[#8f949a]"><use href="#right"/></svg>Audio Bus</button>
          <h2 class="justify-center gap-1 bg-[#31363f]"><svg class="size-3" viewBox="0 0 16 16"><path d="M8 0l7 4v8l-7 4-7-4V4z" fill="#dcdddf"/><path d="M8 8v6M8 8L3 5M8 8l5-3M10 11l2-1" stroke="#31363f" stroke-width="1.600"/></svg>CollisionObject2D</h2>
        </div>
        <div class="flex h-[21px] items-center text-[#7d8289]">
          <label for="disable-mode" class="w-[75px] shrink-0 whitespace-nowrap pl-1.5">Disable Mo...</label>
          <div class="relative min-w-0 flex-1 text-[#c3c6ca]"><select id="disable-mode" class="w-full appearance-none bg-[#10151c] pl-1 outline-none"><option>Remove</option></select><svg class="pointer-events-none absolute right-0.5 top-0.5 size-3"><use href="#down"/></svg></div>
        </div>
        <div class="grid h-[198px] auto-rows-fr bg-[#181e27] font-bold *:flex *:items-center">
          <button><svg class="size-2.5 text-[#8f949a]"><use href="#right"/></svg>Collision</button>
          <button><svg class="size-2.5 text-[#8f949a]"><use href="#right"/></svg>Input</button>
          <h2 class="justify-center gap-1 bg-[#31363f]"><svg class="size-3 text-[#8da5f3]"><use href="#ring"/></svg>Node2D</h2>
          <button><svg class="size-2.5 text-[#8f949a]"><use href="#right"/></svg>Transform</button>
          <button><svg class="size-2.5 text-[#8f949a]"><use href="#right"/></svg>Ordering</button>
          <h2 class="justify-center gap-1 bg-[#31363f]"><svg class="size-3" viewBox="0 0 16 16" fill="#dcdddf"><path d="M13 1l2 2-7 8-3-3zM4 9l3 3c-1 3-4 3-6 3 2-2 1-5 3-6z"/></svg>CanvasItem</h2>
          <button><svg class="size-2.5 text-[#8f949a]"><use href="#right"/></svg>Visibility</button>
          <button><svg class="size-2.5 text-[#8f949a]"><use href="#right"/></svg>Texture</button>
          <button><svg class="size-2.5 text-[#8f949a]"><use href="#right"/></svg>Material</button>
          <h2 class="justify-center gap-1 bg-[#31363f]"><svg class="size-3"><use href="#ring"/></svg>Node</h2>
          <button><svg class="size-2.5 text-[#8f949a]"><use href="#right"/></svg>Process</button>
          <button><svg class="size-2.5 text-[#8f949a]"><use href="#right"/></svg>Editor Description</button>
        </div>
        <div class="flex h-[22px] items-center pl-1.5 text-[#8f949a]">Script<button class="ml-auto flex items-center gap-2.5 pr-1 text-[#b5b8bd]">&lt;empty&gt;<svg class="size-3"><use href="#down"/></svg></button></div>
        <button class="mx-2 mt-0.5 flex h-[21px] w-[134px] items-center bg-[#1f252e] pl-1"><svg class="size-3"><use href="#plus"/></svg><span class="flex-1 text-center">Add Metadata</span></button>
      </div>
    </aside>
  </main>

  <!-- Player controls -->
  <footer class="relative h-[50px] shrink-0 bg-linear-to-r from-[#23272c] via-[#2b303a] to-[#23272d]">
    <input type="range" aria-label="Seek" min="0" max="1237" value="596" class="absolute inset-x-0 -top-1.5 m-0 h-4 w-full appearance-none bg-transparent [&::-webkit-slider-runnable-track]:h-1 [&::-webkit-slider-runnable-track]:bg-[linear-gradient(to_right,#fdb823_48.2%,#4b4e55_48.2%)] [&::-webkit-slider-thumb]:-mt-1.5 [&::-webkit-slider-thumb]:size-4 [&::-webkit-slider-thumb]:appearance-none [&::-webkit-slider-thumb]:rounded-full [&::-webkit-slider-thumb]:bg-white">
    <div class="grid h-full grid-cols-[1fr_auto_1fr] items-center text-[#c3c6c9]">
      <div class="flex items-center pl-[18px]">
        <button aria-label="Previous file" class="w-[47px] pl-0.5"><svg class="block h-4 w-[18px]" viewBox="0 0 18 16" fill="currentColor"><path d="M0 1h2v14H0zM10 1v14L3 8zM18 1v14l-8-7z"/></svg></button>
        <button aria-label="Rewind" class="w-[47px] pl-[3px]"><svg class="block h-4 w-4" viewBox="0 0 16 16" fill="currentColor"><path d="M8.500 0v16L0 8zM16 0v16L7.500 8z"/></svg></button>
        <button aria-label="Play" class="w-[47px] pl-0.5"><svg class="block h-[25px] w-[18px]" viewBox="0 0 18 25" fill="currentColor"><path d="M0 0l18 12.500L0 25z"/></svg></button>
        <button aria-label="Fast forward" class="w-[47px] pl-[3px]"><svg class="block h-4 w-4" viewBox="0 0 16 16" fill="currentColor"><path d="M7.500 0v16L16 8zM0 0v16l8.500-8z"/></svg></button>
        <button aria-label="Next file" class="w-[47px] pl-0.5"><svg class="block h-4 w-[18px]" viewBox="0 0 18 16" fill="currentColor"><path d="M16 1h2v14h-2zM8 1v14l7-7zM0 1v14l8-7z"/></svg></button>
        <button aria-label="Mute" class="w-[30px] pl-[3px]"><svg class="block h-[18px] w-[19px]" viewBox="0 0 19 18"><path d="M0 5h5l6-5v18l-6-5H0z" fill="currentColor"/><path d="M12.500 6q2 3 0 6M15 4q4 5 0 10" fill="none" stroke="currentColor" stroke-width="1.300"/></svg></button>
        <input type="range" aria-label="Volume" value="100" class="h-4 w-[60px] appearance-none bg-transparent [&::-webkit-slider-runnable-track]:h-1 [&::-webkit-slider-runnable-track]:rounded-full [&::-webkit-slider-runnable-track]:bg-[#fdb823] [&::-webkit-slider-thumb]:-mt-1.5 [&::-webkit-slider-thumb]:size-4 [&::-webkit-slider-thumb]:appearance-none [&::-webkit-slider-thumb]:rounded-full [&::-webkit-slider-thumb]:bg-white">
      </div>
      <div class="pt-0.5 font-['Inter',sans-serif] text-[12px] tracking-widest text-[#d8dadc]">09:56 / 20:37</div>
      <div class="flex items-center justify-end gap-7 pr-5">
        <button class="pr-0.5 text-[14px] text-white">1.0x</button>
        <button aria-label="Cast"><svg class="block h-[17px] w-5" viewBox="0 0 20 17"><path d="M5 13H2a1 1 0 0 1-1-1V2a1 1 0 0 1 1-1h15a1 1 0 0 1 1 1v10a1 1 0 0 1-1 1h-3" fill="none" stroke="currentColor" stroke-width="1.400"/><path d="M9.500 11l5 5h-10z" fill="currentColor"/></svg></button>
        <button aria-label="Playlist" class="pr-0.5"><svg class="block size-4" viewBox="0 0 16 16"><rect width="16" height="16" rx="1.500" fill="currentColor"/><path d="M2 4.500h2M5 4.500h9M2 8h2M5 8h9M2 11.500h2M5 11.500h9" stroke="#262a31" stroke-width="1.300"/></svg></button>
        <button aria-label="Settings" class="pr-0.5"><svg class="block size-4" viewBox="0 0 16 16" fill="none" stroke="currentColor"><circle cx="8" cy="8" r="4.800" stroke-width="2.600"/><circle cx="8" cy="8" r="6.600" stroke-width="2.400" stroke-dasharray="2.600 2.584"/></svg></button>
        <button aria-label="Picture in picture"><svg class="block h-4 w-5" viewBox="0 0 20 16"><path d="M9 13H3a2 2 0 0 1-2-2V3a2 2 0 0 1 2-2h13a2 2 0 0 1 2 2v4M4 4l3 3M7.500 4.500v3h-3" fill="none" stroke="currentColor" stroke-width="1.200"/><rect x="10" y="8" width="10" height="8" rx="1" fill="currentColor"/></svg></button>
      </div>
    </div>
  </footer>

  <!-- Seek toast and size badge -->
  <div class="absolute left-2 top-7 h-[27px] w-20 rounded bg-[#1e2127] pt-1 text-center font-['Inter','Noto_Sans_CJK_SC',sans-serif] text-[13px] leading-[18px] text-[#e3e4e5]">快退: -10s</div>
  <div class="absolute left-1 top-1 h-9 whitespace-nowrap bg-[#f8f8f8] px-[5px] font-['Inter',sans-serif] text-[25px] leading-9 text-[#222]">Size: 50%</div>

  <!-- Capture tools -->
  <div class="absolute right-[18px] top-[298px] flex flex-col gap-4 font-['Open_Sans',sans-serif] text-[11px] text-white *:flex *:size-[30px] *:items-center *:justify-center *:rounded-full *:bg-[#33434b]/95">
    <button aria-label="Crop screenshot"><svg class="size-4" viewBox="0 0 16 16" fill="none" stroke="currentColor" stroke-width="1.500"><path d="M3 0v13h13M0 3h13v13"/><path d="M5.500 11V8l2 1.500L9 7l1.500 2v2z" fill="currentColor" stroke="none"/></svg></button>
    <button>GIF</button>
    <button aria-label="Record"><svg class="size-4" viewBox="0 0 16 16" fill="none" stroke="currentColor" stroke-width="1.200"><rect x=".6" y="6.500" width="10.500" height="8" rx="1"/><circle cx="3.200" cy="3.700" r="2.200"/><circle cx="8.700" cy="3" r="2.600"/><path d="M11.500 9.500l4-2v6.500l-4-2M3 9h3"/></svg></button>
    <button class="text-[10px]">OCR</button>
    <button aria-label="Layout"><svg class="size-4" viewBox="0 0 16 16" fill="none" stroke="currentColor" stroke-width="1.400"><path d="M1 1h14v14H1zM8 1v14M8 8h7"/></svg></button>
  </div>
</div>

<script>
  // Ruler ticks: one every 50 units, 500 units span 236.5px from the origin.
  var step = 23.65, d = "", k, p;
  for (k = -7; k < 60; k++) {
    p = Math.round(189 + k * step) + 0.5;
    d += "M" + p + " " + (k % 10 === 0 ? 0 : k % 5 === 0 ? 4 : 9) + "V12";
  }
  for (k = -6; k < 16; k++) {
    p = Math.round(155 + k * step) + 0.5;
    d += "M" + (k % 10 === 0 ? 0 : k % 5 === 0 ? 4 : 9) + " " + p + "H12";
  }
  document.getElementById("ticks").setAttribute("d", d);
</script>
</body>
</html>
